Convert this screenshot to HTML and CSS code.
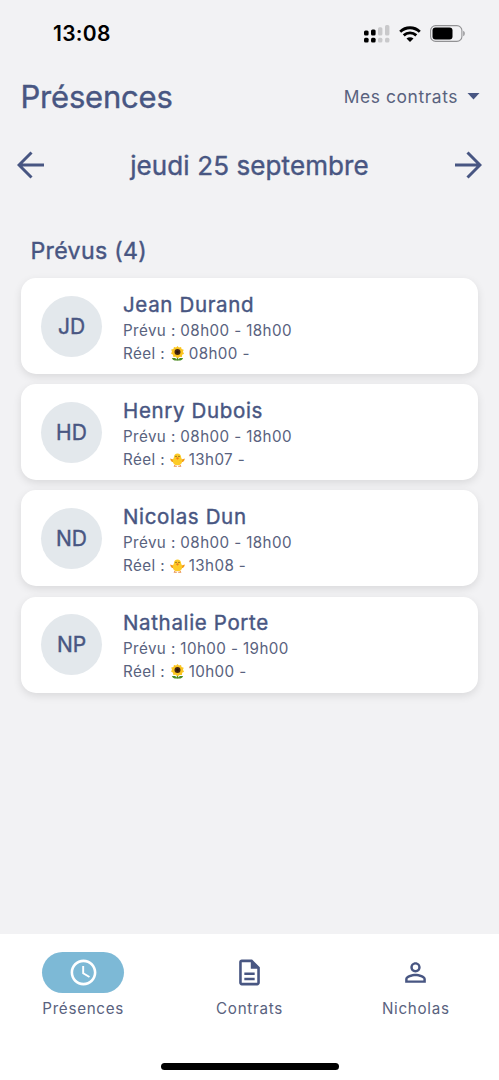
FILE: index.html
```
<!DOCTYPE html>
<html lang="fr">
<head>
<meta charset="utf-8">
<title>Présences</title>
<link rel="stylesheet" href="styles.css">
</head>
<body>
<svg class="defs" aria-hidden="true">
  <symbol id="sunflower" viewBox="0 0 16 16">
    <path d="M8 9v6.500" stroke="#4c8a22" stroke-width="1.400"/>
    <path d="M8 15.300C6.500 12.500 4 12.500 2 13.100c1 2 3.500 3 6 2.200zM8 15.300c1.500-2.800 4-2.800 6-2.200-1 2-3.500 3-6 2.200z" fill="#4c8a22"/>
    <path d="M8 0l1.500 1.700L11.800 1l.5 2.300 2.300.7-.8 2.200 1.200 2-2 1.200-.3 2.400-2.400-.2L8 13l-1.900-1.500-2.500.1-.4-2.300L1.100 8l1-2-.8-2.200 2.400-.6L4.200 1l2.300.7z" fill="#fbc520"/>
    <circle cx="8" cy="6.300" r="3.200" fill="#472711"/>
    <circle cx="8" cy="6.300" r="1.300" fill="#28160d"/>
  </symbol>
  <symbol id="chick" viewBox="0 0 16 16">
    <path d="M5.800 13.500L4.300 15.200h3M10.200 13.500l1.500 1.700h-3" fill="none" stroke="#e88a45" stroke-width="1"/>
    <path d="M4.500 8.300L.2 6.800c.2 2.300 1.400 3.800 4 4.200zM11.500 8.300l4.300-1.500c-.2 2.300-1.400 3.800-4 4.200z" fill="#f39a1c"/>
    <path d="M8 1.500c2.300 0 3.700 1.400 3.700 3.400 0 1.400 1.300 2.600 1.300 4.600 0 2.700-2 4.700-5 4.700s-5-2-5-4.700c0-2 1.300-3.200 1.300-4.600C4.300 2.900 5.700 1.500 8 1.500z" fill="#fdcb26"/>
    <path d="M6.300 6.500L8 5.700l1.700.8L8 8.200z" fill="#ef7e1c"/>
    <circle cx="6.400" cy="4.600" r=".65" fill="#493515"/><circle cx="9.600" cy="4.600" r=".65" fill="#493515"/>
  </symbol>
</svg>
<div class="app">
  <div class="status">
    <span class="time">13:08</span>
    <svg class="signal" viewBox="0 0 26 18">
      <g fill="#000"><rect x="0" y="5.400" width="4.600" height="5.200" rx="1.500"/><rect x="7" y="4.400" width="4.600" height="6.200" rx="1.500"/><rect x="0" y="12.700" width="4.600" height="4.800" rx="1.500"/><rect x="7" y="12.700" width="4.600" height="4.800" rx="1.500"/></g>
      <g fill="#c9c9cb"><rect x="14" y="2.200" width="4.400" height="8.400" rx="1.500"/><rect x="21" y="0" width="4.400" height="10.600" rx="1.500"/><rect x="14" y="12.700" width="4.400" height="4.800" rx="1.500"/><rect x="21" y="12.700" width="4.400" height="4.800" rx="1.500"/></g>
    </svg>
    <svg class="wifi" viewBox="0 0 22 16">
      <path d="M1.200 5.700C6.700.4 15.300.4 20.800 5.700M4.700 9.400c3.600-3.300 9-3.300 12.600 0" fill="none" stroke="#000" stroke-width="2.800"/>
      <path d="M11 16l-3.500-3.500c2-1.700 5-1.700 7 0z"/>
    </svg>
    <svg class="battery" viewBox="0 0 36 17">
      <rect x=".6" y=".6" width="31.300" height="15.800" rx="5" fill="none" stroke="#929294" stroke-width="1.100"/>
      <rect x="2.500" y="2.500" width="20" height="12" rx="3"/>
      <path d="M33.300 5.800c1.800.6 1.800 4.800 0 5.400z" fill="#858587"/>
    </svg>
  </div>
  <header class="header">
    <h1 class="title">Présences</h1>
    <div class="filter"><span>Mes contrats</span><svg class="caret" viewBox="0 0 12 7"><path d="M0 0h12L6 6.500z"/></svg></div>
  </header>
  <div class="day">
    <svg class="arrow" viewBox="0 0 28 28"><path d="M27 14H2M14.500 1.500L2 14l12.500 12.500"/></svg>
    <h2 class="date">jeudi 25 septembre</h2>
    <svg class="arrow" viewBox="0 0 28 28"><path d="M1 14h25M13.500 1.500L26 14 13.500 26.500"/></svg>
  </div>
  <main class="content">
    <h2 class="section">Prévus (4)</h2>
    <div class="list">
      <article class="card"><div class="avatar">JD</div><div class="info"><h3 class="name">Jean Durand</h3><p class="line">Prévu : 08h00 - 18h00</p><p class="line">Réel : <svg class="emoji"><use href="#sunflower"/></svg>08h00 -</p></div></article>
      <article class="card"><div class="avatar">HD</div><div class="info"><h3 class="name">Henry Dubois</h3><p class="line">Prévu : 08h00 - 18h00</p><p class="line">Réel : <svg class="emoji"><use href="#chick"/></svg>13h07 -</p></div></article>
      <article class="card"><div class="avatar">ND</div><div class="info"><h3 class="name">Nicolas Dun</h3><p class="line">Prévu : 08h00 - 18h00</p><p class="line">Réel : <svg class="emoji"><use href="#chick"/></svg>13h08 -</p></div></article>
      <article class="card"><div class="avatar">NP</div><div class="info"><h3 class="name">Nathalie Porte</h3><p class="line">Prévu : 10h00 - 19h00</p><p class="line">Réel : <svg class="emoji"><use href="#sunflower"/></svg>10h00 -</p></div></article>
    </div>
  </main>
  <nav class="nav">
    <div class="tabs">
      <div class="tab"><div class="pill active"><svg class="icon" viewBox="0 0 24 24"><path d="M11.990 2C6.470 2 2 6.480 2 12s4.470 10 9.990 10C17.520 22 22 17.520 22 12S17.520 2 11.990 2zM12 20c-4.420 0-8-3.580-8-8s3.580-8 8-8 8 3.580 8 8-3.580 8-8 8zm.5-13H11v6l5.250 3.150.75-1.230-4.500-2.670z"/></svg></div><span>Présences</span></div>
      <div class="tab"><div class="pill"><svg class="icon" viewBox="0 0 24 24"><path fill-rule="evenodd" d="M6 2h8l6 6v12c0 1.100-.9 2-2 2H6c-1.100 0-2-.9-2-2V4c0-1.100.9-2 2-2zm0 2v16h12V9h-5V4zM8 12h8v2H8zM8 16h8v2H8z"/></svg></div><span>Contrats</span></div>
      <div class="tab"><div class="pill"><svg class="icon" viewBox="0 0 24 24"><path d="M12 5.900a2.100 2.100 0 110 4.200 2.100 2.100 0 010-4.200m0 9c2.970 0 6.100 1.460 6.100 2.100v1.100H5.900V17c0-.64 3.130-2.100 6.100-2.100M12 4C9.790 4 8 5.790 8 8s1.790 4 4 4 4-1.790 4-4-1.790-4-4-4zm0 9c-2.670 0-8 1.340-8 4v3h16v-3c0-2.660-5.330-4-8-4z"/></svg></div><span>Nicholas</span></div>
    </div>
    <div class="home"></div>
  </nav>
</div>
</body>
</html>
```
FILE: styles.css
```
* { box-sizing: border-box; }
body { margin: 0; background: #f2f2f4; font-family: Inter, "Liberation Sans", sans-serif; color: #485682; }
h1, h2, h3, p { margin: 0; font-weight: 400; }
h1, h2, h3, .avatar { -webkit-text-stroke: .4px currentColor; }
.defs { position: absolute; width: 0; height: 0; }
.app { height: 1080px; display: flex; flex-direction: column; overflow: hidden; }
.status { height: 67px; padding: 0 33px 0 53px; display: flex; align-items: center; color: #000; }
.time { font-size: 21px; font-weight: 600; line-height: 24px; letter-spacing: .3px; margin-right: auto; }
.signal { width: 26px; height: 18px; margin-right: 9px; }
.wifi { width: 22px; height: 16px; margin-right: 9px; }
.battery { width: 36px; height: 17px; }
.header { height: 58px; padding: 0 19px 0 20.500px; display: flex; align-items: center; justify-content: space-between; }
.title { font-size: 31px; letter-spacing: -.2px; }
.filter { display: flex; align-items: center; gap: 9px; font-size: 17.400px; letter-spacing: .58px; color: #59627e; }
.caret { width: 13px; height: 7px; fill: #485682; }
.day { height: 80px; padding: 0 17px; display: flex; align-items: center; justify-content: space-between; }
.arrow { width: 28px; height: 28px; fill: none; stroke: #485682; stroke-width: 3; }
.date { font-size: 26px; letter-spacing: .1px; padding-top: 1px; }
.content { flex: 1; padding: 30px 21px 0; }
.section { font-size: 23.200px; line-height: 30px; letter-spacing: .3px; padding: 1px 0 0 9.500px; }
.list { display: flex; flex-direction: column; gap: 10.200px; margin-top: 12px; }
.card { height: 96px; border-radius: 15px; background: #fff; display: flex; align-items: center; gap: 21px; padding: 0 20px; box-shadow: 0 3px 8px rgba(0, 0, 0, .1); }
.avatar { width: 61px; height: 61px; border-radius: 50%; background: #e3e8ec; display: flex; align-items: center; justify-content: center; font-size: 21px; }
.name { font-size: 20.500px; line-height: 27px; letter-spacing: .65px; margin-bottom: 1px; }
.info { padding-top: 3px; }
.line { font-size: 15.200px; line-height: 23px; letter-spacing: .4px; color: #59627e; white-space: nowrap; }
.emoji { width: 15px; height: 15px; vertical-align: -2px; margin: 0 3.500px 0 .5px; }
.nav { height: 146px; background: #fff; padding-top: 18px; display: flex; flex-direction: column; align-items: center; }
.tabs { width: 100%; display: grid; grid-template-columns: repeat(3, 1fr); }
.tab { display: flex; flex-direction: column; align-items: center; gap: 5px; font-size: 15.200px; line-height: 21px; letter-spacing: .7px; color: #59627e; }
.pill { width: 82px; height: 41px; border-radius: 21px; display: flex; align-items: center; justify-content: center; }
.icon { width: 31px; height: 31px; fill: #485682; }
.active { background: #7db9d6; }
.active .icon { fill: #fff; }
.home { width: 178px; height: 7px; border-radius: 4px; background: #000; margin-top: 44px; }
```
